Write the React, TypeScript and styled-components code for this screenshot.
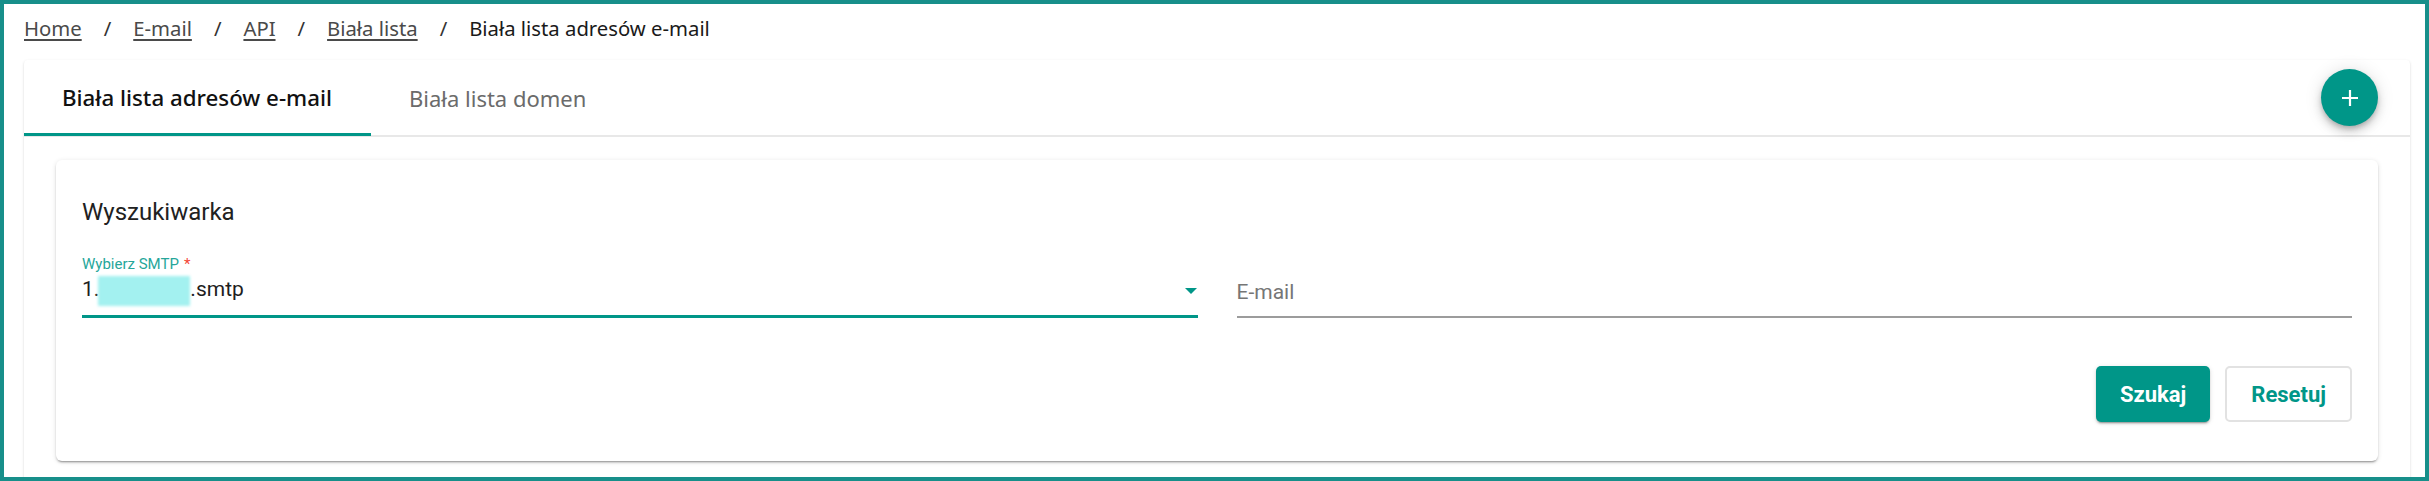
import React from 'react';
import styled, { createGlobalStyle } from 'styled-components';

const teal = '#009688';

const GlobalStyle = createGlobalStyle`
  html,
  body {
    margin: 0;
    padding: 0;
    background: #fff;
  }

  body {
    font-family: 'Noto Sans', 'Open Sans', sans-serif;
  }
`;

const Frame = styled.div`
  box-sizing: border-box;
  height: 100vh;
  border: 4px solid #178f8a;
  padding: 10px 15px 0 20px;
  display: flex;
  flex-direction: column;
  overflow: hidden;
`;

const Breadcrumbs = styled.nav`
  display: flex;
  align-items: center;
  height: 28px;
  font-size: 20.3px;
  line-height: 28px;
  margin-bottom: 18px;
  color: #1a1a1a;
`;

const Crumb = styled.a`
  color: #4a4a4a;
  text-decoration: underline;
  text-decoration-thickness: 2px;
  text-underline-offset: 3px;
  cursor: pointer;
`;

const Separator = styled.span`
  margin: 0 22px;
  color: #333;
`;

const Panel = styled.section`
  flex: 1 0 auto;
  background: #fff;
  border-radius: 4px 4px 0 0;
  box-shadow: 0 2px 1px -1px rgba(0, 0, 0, 0.2), 0 1px 1px 0 rgba(0, 0, 0, 0.14),
    0 1px 3px 0 rgba(0, 0, 0, 0.12);
`;

const TabBar = styled.div`
  box-sizing: border-box;
  display: flex;
  align-items: flex-start;
  height: 77px;
  padding-right: 32px;
  border-bottom: 2px solid #e8e8e8;
`;

const Tab = styled.button<{ $active?: boolean }>`
  box-sizing: border-box;
  display: flex;
  align-items: center;
  height: 76px;
  margin-bottom: -1px;
  padding: 2px 39px 0 38px;
  border: none;
  border-bottom: 3px solid ${(p) => (p.$active ? teal : 'transparent')};
  background: transparent;
  font-family: 'Noto Sans', 'Open Sans', sans-serif;
  font-size: ${(p) => (p.$active ? '22.3px' : '22px')};
  line-height: 30px;
  font-weight: ${(p) => (p.$active ? 500 : 400)};
  color: ${(p) => (p.$active ? '#111' : '#6b6b6b')};
  cursor: pointer;
  white-space: nowrap;
`;

const Fab = styled.button`
  margin-left: auto;
  align-self: center;
  width: 57px;
  height: 57px;
  border: none;
  border-radius: 50%;
  background: ${teal};
  display: grid;
  place-items: center;
  cursor: pointer;
  box-shadow: 0 3px 5px -1px rgba(0, 0, 0, 0.2), 0 6px 10px 0 rgba(0, 0, 0, 0.14),
    0 1px 18px 0 rgba(0, 0, 0, 0.12);
`;

const Content = styled.div`
  padding: 23px 32px 32px;
`;

const SearchCard = styled.div`
  border-radius: 6px;
  background: #fff;
  padding: 36px 26px 39px;
  font-family: Roboto, 'Liberation Sans', sans-serif;
  box-shadow: 0 3px 1px -2px rgba(0, 0, 0, 0.2), 0 2px 2px 0 rgba(0, 0, 0, 0.14),
    0 1px 5px 0 rgba(0, 0, 0, 0.12);
`;

const Title = styled.h2`
  margin: 0 0 27px;
  font-size: 24px;
  line-height: 32px;
  font-weight: 400;
  color: #212121;
`;

const Fields = styled.div`
  display: grid;
  grid-template-columns: 1fr 1fr;
  column-gap: 39px;
`;

const Field = styled.div`
  display: flex;
  flex-direction: column;
`;

const Label = styled.label`
  height: 18px;
  margin-bottom: 3px;
  font-size: 15px;
  line-height: 18px;
  color: #26a69a;
`;

const Required = styled.span`
  margin-left: 5px;
  color: #f44336;
`;

const ValueRow = styled.div<{ $focused?: boolean; $placeholder?: boolean }>`
  box-sizing: border-box;
  display: flex;
  align-items: flex-start;
  height: 42px;
  padding-top: ${(p) => (p.$placeholder ? '4px' : '0')};
  border-bottom: ${(p) => (p.$focused ? `3px solid ${teal}` : '2px solid #9c9c9c')};
  font-size: 21px;
  line-height: 24px;
  color: ${(p) => (p.$placeholder ? '#767676' : '#1e1e1e')};
`;

const Value = styled.span`
  flex: 1;
  white-space: nowrap;
`;

const Redacted = styled.span`
  display: inline-block;
  width: 92px;
  height: 30px;
  margin-left: -1px;
  vertical-align: -10px;
  background: #a3f1f0;
  filter: blur(1.5px);
`;

const Arrow = styled.svg`
  margin-top: 12px;
  margin-right: 1px;
  flex-shrink: 0;
`;

const Actions = styled.div`
  display: flex;
  justify-content: flex-end;
  gap: 15px;
  margin-top: 48px;
`;

const Button = styled.button<{ $primary?: boolean }>`
  box-sizing: border-box;
  height: 56px;
  padding: 0 ${(p) => (p.$primary ? '24px' : '24px')};
  border-radius: 5px;
  border: ${(p) => (p.$primary ? 'none' : '2px solid #e2e2e2')};
  background: ${(p) => (p.$primary ? teal : '#fff')};
  color: ${(p) => (p.$primary ? '#fff' : teal)};
  font-family: Roboto, 'Liberation Sans', sans-serif;
  font-size: 22px;
  font-weight: 700;
  cursor: pointer;
  box-shadow: ${(p) =>
    p.$primary
      ? '0 3px 1px -2px rgba(0,0,0,.2), 0 2px 2px 0 rgba(0,0,0,.14), 0 1px 5px 0 rgba(0,0,0,.12)'
      : 'none'};
`;

const crumbs = ['Home', 'E-mail', 'API', 'Biała lista'];

const App: React.FC = () => {
  return (
    <>
      <GlobalStyle />
      <Frame>
        <Breadcrumbs>
          {crumbs.map((c) => (
            <React.Fragment key={c}>
              <Crumb>{c}</Crumb>
              <Separator>/</Separator>
            </React.Fragment>
          ))}
          <span>Biała lista adresów e-mail</span>
        </Breadcrumbs>

        <Panel>
          <TabBar>
            <Tab $active>Biała lista adresów e-mail</Tab>
            <Tab>Biała lista domen</Tab>
            <Fab aria-label="Dodaj">
              <svg width="18" height="18" viewBox="0 0 18 18">
                <path d="M9 1v16M1 9h16" stroke="#fff" strokeWidth="2.2" />
              </svg>
            </Fab>
          </TabBar>

          <Content>
            <SearchCard>
              <Title>Wyszukiwarka</Title>
              <Fields>
                <Field>
                  <Label>
                    Wybierz SMTP<Required>*</Required>
                  </Label>
                  <ValueRow $focused>
                    <Value>
                      1.<Redacted />.smtp
                    </Value>
                    <Arrow width="12" height="6" viewBox="0 0 12 6">
                      <polygon points="0,0 12,0 6,6" fill={teal} />
                    </Arrow>
                  </ValueRow>
                </Field>
                <Field>
                  <Label />
                  <ValueRow $placeholder>
                    <Value>E-mail</Value>
                  </ValueRow>
                </Field>
              </Fields>
              <Actions>
                <Button $primary>Szukaj</Button>
                <Button>Resetuj</Button>
              </Actions>
            </SearchCard>
          </Content>
        </Panel>
      </Frame>
    </>
  );
};

export default App;
